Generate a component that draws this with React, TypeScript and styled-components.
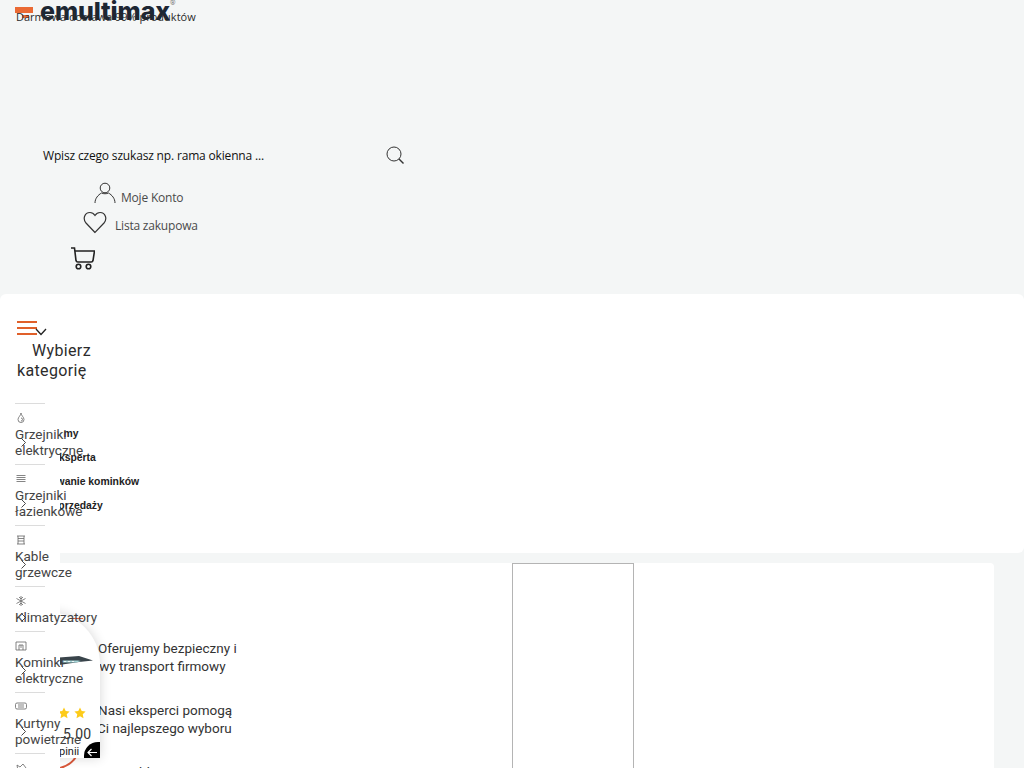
import * as React from 'react';
import styled, { createGlobalStyle } from 'styled-components';

const GlobalStyle = createGlobalStyle`
    html, body {
        margin: 0;
        padding: 0;
        background: #f4f6f6;
        overflow: hidden;
    }
    * {
        box-sizing: border-box;
    }
`

const Page = styled.div`
    position: relative;
    height: 768px;
    overflow: hidden;
    font-family: 'Roboto', 'Liberation Sans', sans-serif;
    color: #333;
    background: #f4f6f6;
`

const Header = styled.header`
    height: 294px;
    position: relative;
    padding-left: 15px;
`

const LogoRow = styled.div`
    display: flex;
    align-items: flex-start;
    height: 143px;
    overflow: hidden;
`

const LogoMark = styled.div`
    width: 18px;
    height: 11px;
    margin-top: 7px;
    margin-right: 7px;
    background: linear-gradient(#ea6a34 0 6px, transparent 6px);
    position: relative;

    &::after {
        content: '';
        position: absolute;
        left: 7px;
        top: 8px;
        width: 7px;
        height: 3px;
        background: #ea6a34;
    }
`

const LogoText = styled.span`
    font-family: 'Inter', 'Liberation Sans', sans-serif;
    font-weight: 800;
    font-size: 25px;
    line-height: 22px;
    color: #1d2733;
    letter-spacing: -0.1px;
`

const LogoReg = styled.span`
    font-size: 7px;
    line-height: 7px;
    color: #777;
`

const Notice = styled.div`
    position: absolute;
    left: 16px;
    top: 10px;
    font-family: 'Open Sans', sans-serif;
    font-size: 11px;
    line-height: 14px;
    color: #2b2b2b;
`

const SearchRow = styled.div`
    display: flex;
    align-items: center;
    justify-content: space-between;
    width: 390px;
    height: 24px;
    padding-left: 28px;
    font-family: 'Open Sans', sans-serif;
    font-size: 12px;
    letter-spacing: -0.17px;
    color: #111;
`

const AccountList = styled.div`
    display: flex;
    flex-direction: column;
    margin-top: 14px;
`

const AccountRow = styled.a<{ $offset: number; $height: number; $gap: number }>`
    display: flex;
    align-items: center;
    gap: ${p => p.$gap}px;
    height: ${p => p.$height}px;
    margin-left: ${p => p.$offset}px;
    font-family: 'Open Sans', sans-serif;
    font-size: 12px;
    letter-spacing: -0.2px;
    color: #4a4a4a;
`

const AccountLabel = styled.span<{ $drop: number }>`
    margin-top: ${p => p.$drop}px;
`

const MenuCard = styled.section`
    height: 259px;
    background: #fff;
    border-radius: 6px;
    padding: 27px 15px 0;
`

const MenuToggle = styled.div`
    display: flex;
    align-items: flex-end;
    height: 14px;
    margin-left: 2px;
`

const Burger = styled.div`
    width: 20px;
    height: 14px;
    display: flex;
    flex-direction: column;
    justify-content: space-between;

    span {
        display: block;
        height: 2px;
        background: #e0602a;
    }
`

const ToggleChevron = styled.svg`
    margin-left: -2px;
    margin-bottom: -1px;
`

const MenuTitle = styled.h2`
    margin: 6px 0 0 2px;
    width: 84px;
    text-indent: 15px;
    font-size: 16px;
    line-height: 20px;
    font-weight: 400;
    color: #2c2c2c;
    letter-spacing: 0.35px;
`

const NavList = styled.nav`
    display: flex;
    flex-direction: column;
    gap: 10px;
    margin-top: 46px;
`

const NavLink = styled.a`
    font-family: 'Liberation Sans', Arial, sans-serif;
    font-size: 10.4px;
    font-weight: 700;
    line-height: 14px;
    color: #222;
`

const Sidebar = styled.aside`
    position: absolute;
    left: 0;
    top: 395px;
    bottom: 0;
    width: 60px;
    padding: 8px 0 0 15px;
    background: #fff;
    z-index: 3;
`

const CategoryItem = styled.div`
    width: 30px;
    padding: 8px 0 6px;
    border-top: 1px solid #dcdcdc;
`

const CategoryIcon = styled.div`
    height: 14px;
    color: #666;
    display: flex;
    align-items: flex-start;
`

const CategoryName = styled.div`
    position: relative;
    font-size: 13.5px;
    line-height: 16px;
    color: #444;
`

const Chevron = styled.svg`
    position: absolute;
    left: 6px;
    top: 50%;
    margin-top: -4px;
`

const LowerPanel = styled.section`
    display: flex;
    margin: 10px 30px 0 0;
    height: 300px;
    background: #fff;
    border-radius: 4px;
`

const Benefits = styled.div`
    position: relative;
    width: 512px;
    padding: 76px 0 0 84px;
    display: flex;
    flex-direction: column;
    gap: 26px;
`

const Benefit = styled.p<{ $indent: number; $left: number; $width: number }>`
    margin: 0 0 0 ${p => p.$left}px;
    width: ${p => p.$width}px;
    text-indent: ${p => p.$indent}px;
    font-size: 13.5px;
    line-height: 18px;
    color: #333;
`

const ProductBox = styled.div`
    width: 122px;
    height: 300px;
    border: 1px solid #b4b4b4;
`

const Swoosh = styled.svg`
    position: absolute;
    left: 55px;
    top: 185px;
`

const RatingWidget = styled.div`
    position: absolute;
    left: 0;
    top: 612px;
    width: 100px;
    height: 146px;
    background: #fff;
    border-top-right-radius: 52px;
    box-shadow: 0 0 12px rgba(0, 0, 0, 0.16);
    z-index: 2;
`

const WidgetArt = styled.svg`
    position: absolute;
    left: 58px;
    top: 0;
`

const Stars = styled.div`
    position: absolute;
    left: 58px;
    top: 95px;
    display: flex;
    gap: 4px;
`

const Score = styled.div`
    position: absolute;
    left: 63px;
    top: 114px;
    font-size: 14px;
    line-height: 16px;
    letter-spacing: 0.3px;
    color: #333;
`

const WidgetLabel = styled.div`
    position: absolute;
    left: 59px;
    top: 133px;
    font-size: 11px;
    line-height: 13px;
    color: #222;
`

const Corner = styled.div`
    position: absolute;
    right: 0;
    bottom: 0;
    width: 16px;
    height: 16px;
    background: #000;
    border-top-left-radius: 14px;
    display: flex;
    align-items: flex-end;
    justify-content: center;
`

const thin = { fill: 'none', stroke: 'currentColor', strokeWidth: 1 };

const Star = () => (
    <svg width="12" height="12" viewBox="0 0 24 24">
        <path d="M12 1l3.400 7.200 7.800 1-5.700 5.400 1.500 7.800L12 18.600l-7 3.800 1.500-7.800L.8 9.200l7.800-1z" fill="#fdcb1a" />
    </svg>
);

const categories = [
    {
        name: 'Grzejniki elektryczne',
        icon: <path d="M6 1c0 2.500-3 4-3 6.500a3 3 0 0 0 6 0C9 5 6 3.500 6 1zM6 6a1.500 1.500 0 1 1 0 3" />,
    },
    {
        name: 'Grzejniki łazienkowe',
        icon: <path d="M1.500 2.500h9M1.500 4.500h9M1.500 6.500h9M1.500 8.500h9" />,
    },
    {
        name: 'Kable grzewcze',
        icon: <path d="M2 2h8M3 2v8M9 2v8M2 10h8M3 4.500h6M3 7h6" />,
    },
    {
        name: 'Klimatyzatory',
        icon: <path d="M6 1v10M1.500 3.500l9 5M10.500 3.500l-9 5M4 2l2 2 2-2M4 10l2-2 2 2" />,
    },
    {
        name: 'Kominki elektryczne',
        icon: <path d="M1 2h10v8H1zM4 10V5h4v5M6 5v3" />,
    },
    {
        name: 'Kurtyny powietrzne',
        icon: <path d="M2 2h8a1.500 1.500 0 0 1 1.500 1.500v3A1.500 1.500 0 0 1 10 8H2A1.500 1.500 0 0 1 .5 6.500v-3A1.500 1.500 0 0 1 2 2zM3 4h6M3 6h6" />,
    },
    {
        name: 'Ogrzewanie',
        icon: <path d="M2 3l3 2 3-3 3 4-3 5-5-2z" />,
    },
];

const navLinks = ['Dlaczego my', 'Porada eksperta', 'Projektowanie kominków', 'Punkty sprzedaży'];

export default function App() {
    return (
        <Page>
            <GlobalStyle />
            <Header>
                <LogoRow>
                    <LogoMark />
                    <LogoText>emultimax</LogoText>
                    <LogoReg>®</LogoReg>
                </LogoRow>
                <Notice>Darmowa dostawa 99% produktów</Notice>
                <SearchRow>
                    <span>Wpisz czego szukasz np. rama okienna ...</span>
                    <svg width="20" height="20" viewBox="0 0 20 20" {...thin} color="#333">
                        <circle cx="9" cy="9" r="7" />
                        <path d="M14 14l4.500 4.500" strokeWidth="1.400" />
                    </svg>
                </SearchRow>
                <AccountList>
                    <AccountRow $offset={79} $height={26} $gap={5}>
                        <svg width="22" height="24" viewBox="0 0 22 24" {...thin} color="#333">
                            <circle cx="11" cy="6" r="4.800" />
                            <path d="M1 21c0-4.500 3-8 6.500-10M21 21c0-4.500-3-8-6.500-10M7.500 11c2 1 5 1 7 0" />
                        </svg>
                        <AccountLabel $drop={7}>Moje Konto</AccountLabel>
                    </AccountRow>
                    <AccountRow $offset={68} $height={29} $gap={8}>
                        <svg width="24" height="24" viewBox="0 0 24 24" {...thin} color="#333" strokeWidth="1.200">
                            <path d="M12 22.500L3 13C-.5 9 1.500 2.500 7 2.500c2.500 0 4 1.500 5 3 1-1.500 2.500-3 5-3 5.500 0 7.500 6.500 4 10.500z" />
                        </svg>
                        <AccountLabel $drop={8}>Lista zakupowa</AccountLabel>
                    </AccountRow>
                    <AccountRow $offset={56} $height={44} $gap={0}>
                        <svg width="24" height="24" viewBox="0 0 24 24" {...thin} color="#222" strokeWidth="1.600">
                            <path d="M0 2h3.500L5 14.500c.2 1 .8 1.500 1.800 1.500h13.400c1 0 1.600-.5 1.800-1.500L23.500 5H4" />
                            <circle cx="7.500" cy="20.500" r="2.300" />
                            <circle cx="17.500" cy="20.500" r="2.300" />
                        </svg>
                    </AccountRow>
                </AccountList>
            </Header>

            <MenuCard>
                <MenuToggle>
                    <Burger>
                        <span />
                        <span />
                        <span />
                    </Burger>
                    <ToggleChevron width="12" height="8" viewBox="0 0 12 8" fill="none" stroke="#222" strokeWidth="1.300">
                        <path d="M1 1l5 5.500L11 1" />
                    </ToggleChevron>
                </MenuToggle>
                <MenuTitle>Wybierz kategorię</MenuTitle>
                <NavList>
                    {navLinks.map(link => (
                        <NavLink key={link}>{link}</NavLink>
                    ))}
                </NavList>
            </MenuCard>

            <LowerPanel>
                <Benefits>
                    <Swoosh width="30" height="20" viewBox="0 0 30 20" fill="none" stroke="#d9573a" strokeWidth="2">
                        <path d="M22 7c-3 6-9 11-17 13" />
                    </Swoosh>
                    <Benefit $indent={14} $left={0} $width={155}>Oferujemy bezpieczny i nowy transport firmowy</Benefit>
                    <Benefit $indent={1} $left={13} $width={140}>Nasi eksperci pomogą Ci najlepszego wyboru</Benefit>
                    <Benefit $indent={0} $left={34} $width={100}>Szybko</Benefit>
                </Benefits>
                <ProductBox />
            </LowerPanel>

            <RatingWidget>
                <WidgetArt width="42" height="146" viewBox="0 0 42 146" fill="none">
                    <path d="M12 6.500h13" stroke="#d9573a" strokeWidth="1" />
                    <path d="M1 45.500l20-1.500 14 4.500-14 1.500-20 3z" fill="#39444b" />
                    <path d="M4 48.500h16l3 .5-5 1.500H4z" fill="#a5d6d8" />
                    <path d="M6 49.500h11" stroke="#fff" strokeWidth="0.800" strokeDasharray="2 2" />
                </WidgetArt>
                <Stars>
                    <Star />
                    <Star />
                </Stars>
                <Score>5.00</Score>
                <WidgetLabel>pinii</WidgetLabel>
                <Corner>
                    <svg width="12" height="12" viewBox="0 0 12 12" fill="none" stroke="#fff" strokeWidth="1.200">
                        <path d="M11 6.500H2M5.500 3L2 6.500 5.500 10" />
                    </svg>
                </Corner>
            </RatingWidget>

            <Sidebar>
                {categories.map(category => (
                    <CategoryItem key={category.name}>
                        <CategoryIcon>
                            <svg width="12" height="12" viewBox="0 0 12 12" {...thin} strokeWidth="0.800">
                                {category.icon}
                            </svg>
                        </CategoryIcon>
                        <CategoryName>
                            {category.name}
                            <Chevron width="5" height="9" viewBox="0 0 5 9" fill="none" stroke="#333" strokeWidth="0.900">
                                <path d="M.5 .5l4 4-4 4" />
                            </Chevron>
                        </CategoryName>
                    </CategoryItem>
                ))}
            </Sidebar>
        </Page>
    );
}
